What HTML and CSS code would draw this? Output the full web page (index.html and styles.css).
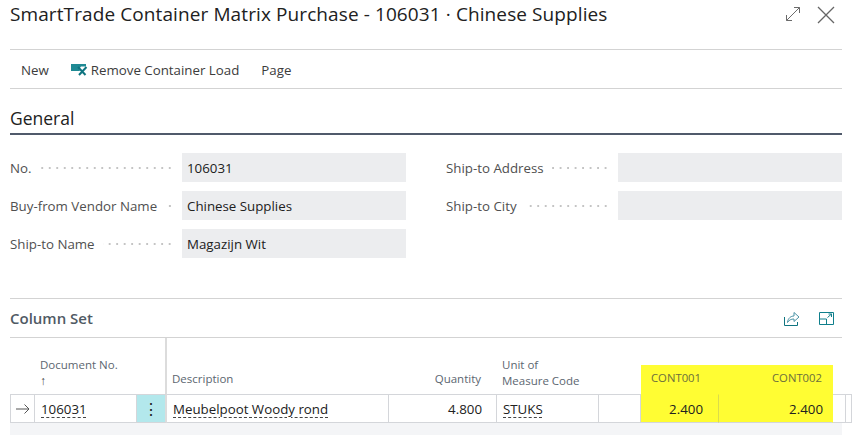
FILE: index.html
```html
<!DOCTYPE html>
<html lang="en">
<head>
<meta charset="utf-8">
<title>SmartTrade Container Matrix Purchase</title>
<link rel="stylesheet" href="styles.css">
</head>
<body>
<div class="page">
  <header class="titlebar">
    <h1 class="title">SmartTrade Container Matrix Purchase - 106031 · Chinese Supplies</h1>
    <div class="window-tools">
      <svg class="icon-expand" width="16" height="16" viewBox="0 0 16 16"><path d="M1.500 14.500 14.500 1.500M9 1.500h5.500V7M1.500 9v5.500H7" fill="none" stroke="#6b6b6b" stroke-width="1"/></svg>
      <svg class="icon-close" width="18" height="18" viewBox="0 0 18 18"><path d="M1 1 17 17M17 1 1 17" fill="none" stroke="#666" stroke-width="1.300"/></svg>
    </div>
  </header>
  <nav class="actions">
    <span class="action">New</span>
    <span class="action action-icon">
      <svg width="17" height="12" viewBox="0 0 17 12"><path d="M0 0h15v2.500H10L8 5l1 2H0z" fill="#1f8a94"/><path d="M7 3 14.500 11M15.500 3 8 11" fill="none" stroke="#0f7480" stroke-width="2"/></svg>
      Remove Container Load
    </span>
    <span class="action">Page</span>
  </nav>
  <section class="general">
    <h2 class="section-title">General</h2>
    <div class="fields">
      <div class="field"><span class="label">No.</span><span class="leader"></span><span class="value">106031</span></div>
      <div class="field"><span class="label">Ship-to Address</span><span class="leader"></span><span class="value"></span></div>
      <div class="field"><span class="label">Buy-from Vendor Name</span><span class="leader"></span><span class="value">Chinese Supplies</span></div>
      <div class="field"><span class="label">Ship-to City</span><span class="leader"></span><span class="value"></span></div>
      <div class="field"><span class="label">Ship-to Name</span><span class="leader"></span><span class="value">Magazijn Wit</span></div>
    </div>
  </section>
  <section class="column-set">
    <h3 class="subhead">Column Set</h3>
    <div class="part-tools">
      <svg width="16" height="15" viewBox="0 0 16 15"><path d="M.5 6v8.500h13V11" fill="none" stroke="#0f7480"/><path d="M3.500 11.500C4 7 7 5 10 5V1.500L15 6l-5 4.500V8C7 8 5 9 3.500 11.500z" fill="none" stroke="#4a93a6"/></svg>
      <svg width="15" height="13" viewBox="0 0 15 13"><path d="M.5.500h14v12H.5zM.5 7h7v5.500M8.500 5.500l4-3.500M9.500 2h3v3" fill="none" stroke="#0f7f8c"/></svg>
    </div>
  </section>
  <div class="matrix">
    <div class="th"></div>
    <div class="th th-doc"><span>Document No.</span><span class="sort">↑</span></div>
    <div class="th th-menu"></div>
    <div class="th">Description</div>
    <div class="th th-right th-qty">Quantity</div>
    <div class="th th-unit">Unit of<br>Measure Code</div>
    <div class="th"></div>
    <div class="th th-hl th-hl-first">CONT001</div>
    <div class="th th-right th-hl th-hl-last">CONT002</div>
    <div class="th"></div>
    <div class="th"></div>

    <div class="td td-arrow">
      <svg width="14" height="10" viewBox="0 0 14 10"><path d="M0 5h13M8.500.5 13 5 8.500 9.500" fill="none" stroke="#555" stroke-width="1"/></svg>
    </div>
    <div class="td"><span class="link">106031</span></div>
    <div class="td td-menu">⋮</div>
    <div class="td"><span class="link">Meubelpoot Woody rond</span></div>
    <div class="td td-right td-qty">4.800</div>
    <div class="td"><span class="link">STUKS</span></div>
    <div class="td"></div>
    <div class="td td-right td-hl td-hl-first">2.400</div>
    <div class="td td-right td-hl">2.400</div>
    <div class="td"></div>
    <div class="td"></div>
  </div>
  <div class="grid-foot"></div>
</div>
</body>
</html>
```
FILE: styles.css
```css
* { box-sizing: border-box; }
html, body { margin: 0; padding: 0; background: #fff; }
body { font-family: "Open Sans", "Noto Sans", sans-serif; color: #212121; overflow: hidden; }
.page { width: 856px; height: 435px; padding: 0 14px 0 10px; overflow: hidden; }

.titlebar { height: 49px; display: flex; justify-content: space-between; padding-top: 1px; }
.title { margin: 0; font-size: 19px; line-height: 27px; font-weight: 400; letter-spacing: 0.1px; color: #212121; white-space: nowrap; }
.window-tools { display: flex; gap: 16px; align-items: flex-start; padding-top: 5px; margin-right: 7px; }

.actions { height: 40px; border-top: 1px solid #d3d3d3; border-bottom: 1px solid #d3d3d3; display: flex; align-items: center; gap: 22px; padding: 2px 0 0 11px; font-size: 13.300px; color: #3c3c3c; }
.action { white-space: nowrap; }
.action-icon { display: flex; align-items: center; gap: 3px; }

.general { padding-top: 18px; }
.section-title { margin: 0; height: 28px; border-bottom: 2px solid #505a6b; font-size: 17.500px; line-height: 22px; font-weight: 400; color: #212121; }
.fields { display: grid; grid-template-columns: 396px 396px; column-gap: 40px; row-gap: 9px; padding-top: 18px; }
.field { height: 29px; display: flex; align-items: center; font-size: 13.300px; }
.label { color: #505050; white-space: nowrap; padding-right: 8px; }
.leader { flex: 1; height: 2px; margin-right: 9px; background-image: radial-gradient(circle, #c4c4c4 0.8px, transparent 1px); background-size: 7.500px 2px; background-position: right center; }
.value { flex: none; width: 224px; height: 29px; line-height: 29px; padding: 1px 0 0 5px; background: #ecedef; color: #212121; }

.column-set { margin-top: 40px; height: 40px; border-top: 1px solid #d3d3d3; border-bottom: 1px solid #d3d3d3; display: flex; align-items: center; justify-content: space-between; padding-right: 8px; }
.subhead { margin: 0; font-size: 15px; font-weight: 600; color: #505a64; }
.part-tools { display: flex; gap: 19px; align-items: center; }

.matrix { display: grid; grid-template-columns: 25px 102px 30px 222px 108px 102px 42px 78px 114px 6px 3px; grid-template-rows: 56px 29px; }
.th { display: flex; align-items: flex-end; padding: 0 5px 7px 5px; font-size: 11.500px; line-height: 16px; color: #5c6670; white-space: nowrap; }
.th-doc { flex-direction: column; align-items: flex-start; justify-content: flex-end; padding-bottom: 6px; }
.sort { font-size: 12px; line-height: 15px; color: #444; }
.th-menu { border-right: 2px solid #dcdcdc; }
.th-right { justify-content: flex-end; }
.th-qty { padding-right: 16px; }
.th-unit { padding-bottom: 5px; }
.th-hl { background: #fffd33; align-self: end; height: 29px; padding-bottom: 8px; color: #6c6f3c; font-size: 11.300px; }
.th-hl-first { padding-left: 10px; }
.th-hl-last { padding-right: 11px; }

.td { border-top: 1px solid #d4d6da; border-bottom: 1px solid #d4d6da; border-right: 1px solid #d4d6da; display: flex; align-items: center; padding: 0 6px; font-size: 13.300px; color: #212121; white-space: nowrap; }
.td-arrow { border-left: 1px solid #d4d6da; padding: 0 0 0 5px; }
.td-menu { background: #b3e8ec; justify-content: center; font-size: 16px; border-right: 2px solid #dcdcdc; padding: 0; }
.td-right { justify-content: flex-end; padding-right: 9px; }
.td-qty { padding-right: 14px; }
.td-hl { background: #fffd33; border-right-color: #fffd33; border-top-color: #fffd33; }
.td-hl-first { padding-right: 15px; border-right-color: #dcdc4a; }
.link { text-decoration: underline dashed #444 1px; text-underline-offset: 3px; }
.grid-foot { height: 13px; background: #f4f5f7; }
```
